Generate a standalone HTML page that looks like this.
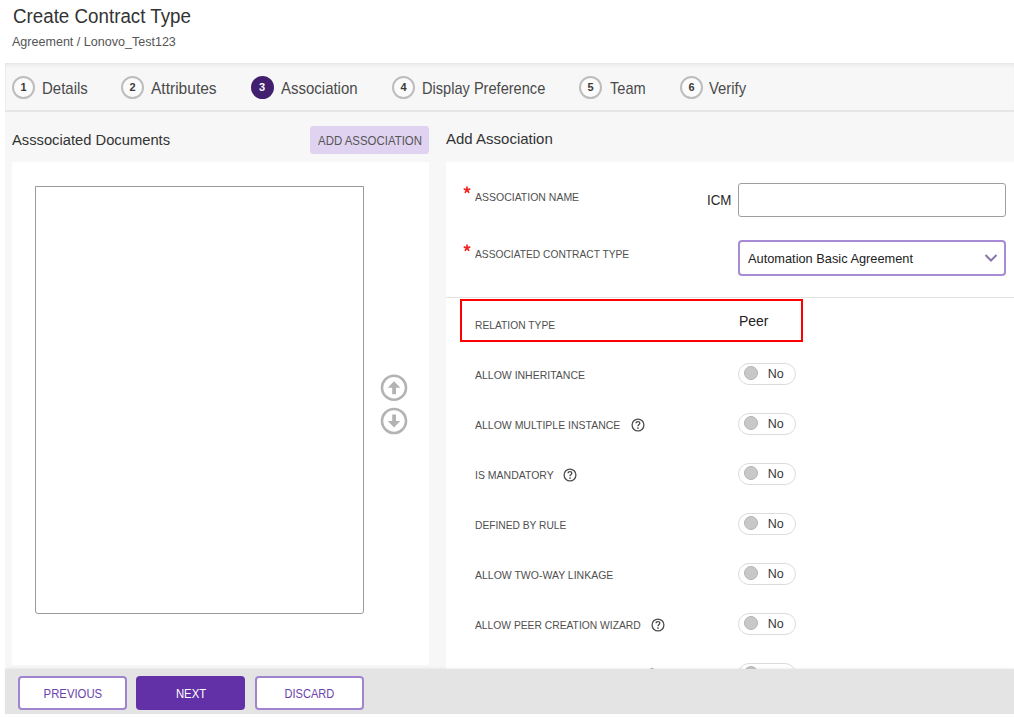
<!DOCTYPE html>
<html><head><meta charset="utf-8">
<style>
*{box-sizing:border-box;margin:0;padding:0}
html,body{width:1014px;height:717px;overflow:hidden;background:#fff;font-family:"Liberation Sans",sans-serif;}
.a{position:absolute;white-space:nowrap}
.t{position:absolute;white-space:nowrap;line-height:1;transform-origin:0 0}
#tabbar{position:absolute;left:5px;top:63px;width:1009px;height:47px;background:#f7f7f7;box-shadow:inset 0 4px 4px -2px rgba(0,0,0,0.07), inset 1px 0 1px rgba(0,0,0,0.03)}
#tabline{position:absolute;left:5px;top:110px;width:1009px;height:2px;background:#e6e6e6}
#content{position:absolute;left:5px;top:112px;width:1009px;height:557px;background:#f7f7f7}
.circ{position:absolute;width:23px;height:23px;border-radius:50%;border:2px solid #bdbdbd;font-size:11px;color:#3a3a3a;text-align:center;line-height:18px;font-weight:bold;background:#fbfbfb}
.tab{position:absolute;top:80.5px;font-size:15.7px;transform:scaleX(0.955);color:#4a4a4a;line-height:1;white-space:nowrap;transform-origin:0 0}
.lab{font-size:11.2px;color:#4f4f4f;transform:scaleX(0.9375)}
.star{color:#e53935;font-size:14px;font-weight:bold}
.tog{position:absolute;left:738.2px;width:57.6px;height:22.6px;border-radius:11.3px;border:1.4px solid #dcdcdc;background:#fff}
.tog i{position:absolute;left:5.3px;top:2.8px;width:14px;height:14px;border-radius:50%;background:#c8c8c8;border:1px solid #b4b4b4}
.tog b{position:absolute;left:28.5px;top:3px;font-weight:normal;font-size:12.5px;color:#383838}
.help{position:absolute;width:14px;height:14px}
.btn{position:absolute;top:676.3px;width:109px;height:34px;border-radius:4px;display:flex;align-items:center;justify-content:center;font-size:13.5px;line-height:1;padding-bottom:1px}
.btn span{display:inline-block;transform:scaleX(0.84);position:relative;top:0.5px;left:0.6px}
</style></head><body>

<div class="t" style="left:12.5px;top:6.5px;font-size:19.5px;color:#333;transform:scaleX(0.962)">Create Contract Type</div>
<div class="t" style="left:12px;top:36px;font-size:12.8px;color:#555;transform:scaleX(0.98)">Agreement / Lonovo_Test123</div>

<div id="tabbar"></div>
<div id="tabline"></div>
<div id="content"></div>

<!-- tabs -->
<div class="circ" style="left:12px;top:75.5px;">1</div>
<div class="tab" style="left:41.5px">Details</div>
<div class="circ" style="left:121px;top:75.5px;">2</div>
<div class="tab" style="left:151px;transform:scaleX(0.99)">Attributes</div>
<div class="circ" style="left:250.5px;top:75.5px;background:#43206f;border-color:#43206f;color:#fff">3</div>
<div class="tab" style="left:281px">Association</div>
<div class="circ" style="left:392px;top:75.5px;">4</div>
<div class="tab" style="left:422px;transform:scaleX(0.93)">Display Preference</div>
<div class="circ" style="left:579px;top:75.5px;">5</div>
<div class="tab" style="left:610px;transform:scaleX(0.93)">Team</div>
<div class="circ" style="left:680px;top:75.5px;">6</div>
<div class="tab" style="left:709px;transform:scaleX(0.945)">Verify</div>

<!-- left -->
<div class="t" style="left:12px;top:132px;font-size:15.2px;color:#333;transform:scaleX(0.97)">Asssociated Documents</div>
<div class="a" style="left:310px;top:126px;width:119px;height:28px;background:#e0d3f1;border-radius:3px"></div>
<div class="t" style="left:317.5px;top:134.5px;font-size:12.3px;color:#555;transform:scaleX(0.93)">ADD ASSOCIATION</div>
<div class="a" style="left:12px;top:162px;width:417px;height:503px;background:#fff"></div>
<div class="a" style="left:35px;top:186px;width:329px;height:428px;border:1px solid #999;border-radius:0 0 3px 3px"></div>
<svg class="a" style="left:380px;top:374px" width="28" height="62" viewBox="0 0 28 62">
  <circle cx="14" cy="13.7" r="12" fill="none" stroke="#b3b3b3" stroke-width="2.6"/>
  <path d="M14 7.2 L20.3 13.8 H16 V20.3 H12.2 V13.8 H7.8 Z" fill="#b3b3b3"/>
  <circle cx="14" cy="47" r="12" fill="none" stroke="#b3b3b3" stroke-width="2.6"/>
  <path d="M14 53.5 L20.3 46.9 H16 V40.4 H12.2 V46.9 H7.8 Z" fill="#b3b3b3"/>
</svg>

<!-- right -->
<div class="t" style="left:446px;top:130.7px;font-size:15px;color:#333">Add Association</div>
<div class="a" style="left:446px;top:162px;width:568px;height:508px;background:#fff"></div>

<svg class="a" style="left:460.4px;top:183.0px" width="14" height="14" viewBox="0 0 14 14"><path d="M7 7 L7.00 4.20 M7 7 L9.66 6.13 M7 7 L8.65 9.27 M7 7 L5.35 9.27 M7 7 L4.34 6.13 " stroke="#f2231f" stroke-width="1.7" stroke-linecap="round"/></svg>
<div class="t lab" style="left:475px;top:191.5px">ASSOCIATION NAME</div>
<div class="t" style="left:707px;top:191.5px;font-size:15.5px;color:#2a2a2a;transform:scaleX(0.86)">ICM</div>
<div class="a" style="left:738px;top:183px;width:268px;height:33.5px;border:1px solid #9e9e9e;border-radius:3px"></div>

<svg class="a" style="left:460.3px;top:240.6px" width="14" height="14" viewBox="0 0 14 14"><path d="M7 7 L7.00 4.20 M7 7 L9.66 6.13 M7 7 L8.65 9.27 M7 7 L5.35 9.27 M7 7 L4.34 6.13 " stroke="#f2231f" stroke-width="1.7" stroke-linecap="round"/></svg>
<div class="t lab" style="left:475px;top:248.7px;transform:scaleX(0.915)">ASSOCIATED CONTRACT TYPE</div>
<div class="a" style="left:738px;top:240px;width:268px;height:36px;border:2px solid #a78cd3;border-radius:4px"></div>
<div class="t" style="left:748px;top:253px;font-size:12.8px;color:#222">Automation Basic Agreement</div>
<svg class="a" style="left:984px;top:253px" width="14" height="10" viewBox="0 0 14 10"><path d="M1.5 2 L7 7.5 L12.5 2" fill="none" stroke="#8a76ad" stroke-width="2"/></svg>

<div class="a" style="left:446px;top:297px;width:568px;height:1px;background:#e3e3e3"></div>
<div class="a" style="left:460px;top:299px;width:343px;height:42.5px;border:2px solid #ff0000"></div>
<div class="t lab" style="left:475px;top:319.7px;transform:scaleX(0.918)">RELATION TYPE</div>
<div class="t" style="left:738.5px;top:312.5px;font-size:15.2px;color:#222;transform:scaleX(0.92)">Peer</div>

<!-- rows -->
<div class="t lab" style="left:475px;top:370px">ALLOW INHERITANCE</div>
<div class="tog" style="top:362.5px"><i></i><b>No</b></div>

<div class="t lab" style="left:475px;top:420px">ALLOW MULTIPLE INSTANCE</div>
<svg class="help" style="left:630.5px;top:417.6px" viewBox="0 0 14 14"><circle cx="7" cy="7" r="5.9" fill="none" stroke="#4d4d4d" stroke-width="1.3"/><path d="M5.1 5.3 Q5.1 3.6 7 3.6 Q8.8 3.6 8.8 5.1 Q8.8 6.2 7.7 6.8 Q7 7.2 7 8.3" fill="none" stroke="#4d4d4d" stroke-width="1.35"/><circle cx="7" cy="10.1" r="0.85" fill="#4d4d4d"/></svg>
<div class="tog" style="top:412.5px"><i></i><b>No</b></div>

<div class="t lab" style="left:475px;top:470px">IS MANDATORY</div>
<svg class="help" style="left:562.5px;top:467.8px" viewBox="0 0 14 14"><circle cx="7" cy="7" r="5.9" fill="none" stroke="#4d4d4d" stroke-width="1.3"/><path d="M5.1 5.3 Q5.1 3.6 7 3.6 Q8.8 3.6 8.8 5.1 Q8.8 6.2 7.7 6.8 Q7 7.2 7 8.3" fill="none" stroke="#4d4d4d" stroke-width="1.35"/><circle cx="7" cy="10.1" r="0.85" fill="#4d4d4d"/></svg>
<div class="tog" style="top:462.5px"><i></i><b>No</b></div>

<div class="t lab" style="left:475px;top:520px;transform:scaleX(0.915)">DEFINED BY RULE</div>
<div class="tog" style="top:512.5px"><i></i><b>No</b></div>

<div class="t lab" style="left:475px;top:570px">ALLOW TWO-WAY LINKAGE</div>
<div class="tog" style="top:562.5px"><i></i><b>No</b></div>

<div class="t lab" style="left:475px;top:620px;transform:scaleX(0.92)">ALLOW PEER CREATION WIZARD</div>
<svg class="help" style="left:650.5px;top:617.8px" viewBox="0 0 14 14"><circle cx="7" cy="7" r="5.9" fill="none" stroke="#4d4d4d" stroke-width="1.3"/><path d="M5.1 5.3 Q5.1 3.6 7 3.6 Q8.8 3.6 8.8 5.1 Q8.8 6.2 7.7 6.8 Q7 7.2 7 8.3" fill="none" stroke="#4d4d4d" stroke-width="1.35"/><circle cx="7" cy="10.1" r="0.85" fill="#4d4d4d"/></svg>
<div class="tog" style="top:612.5px"><i></i><b>No</b></div>

<svg class="help" style="left:645px;top:668px" viewBox="0 0 14 14"><circle cx="7" cy="7" r="5.9" fill="none" stroke="#4d4d4d" stroke-width="1.3"/></svg>
<div class="tog" style="top:662.5px"><i></i><b>No</b></div>

<!-- footer -->
<div class="a" style="left:5px;top:669px;width:1009px;height:44.5px;background:#e4e4e4;box-shadow:0 -1px 2px rgba(0,0,0,0.06)"></div>
<div class="btn" style="left:18px;background:#fff;border:2px solid #a084cf;color:#6a42ad"><span>PREVIOUS</span></div>
<div class="btn" style="left:136px;background:#6331a7;color:#fff"><span>NEXT</span></div>
<div class="btn" style="left:255px;background:#fff;border:2px solid #a084cf;color:#6a42ad"><span style="transform:scaleX(0.82);left:-0.5px">DISCARD</span></div>

</body></html>
